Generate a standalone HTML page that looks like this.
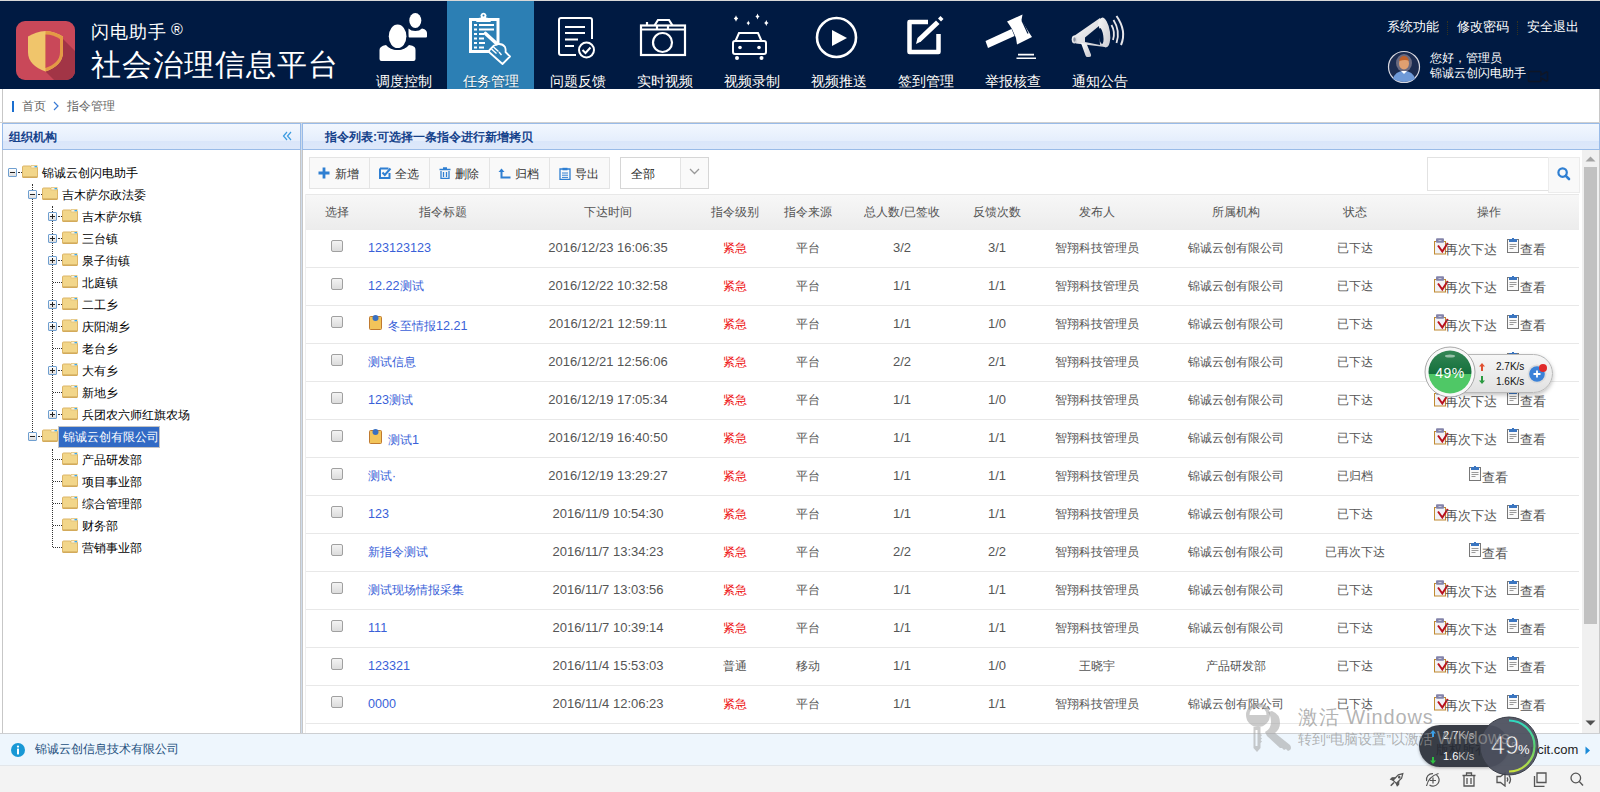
<!DOCTYPE html>
<html><head><meta charset="utf-8">
<style>
*{box-sizing:border-box}
html,body{margin:0;padding:0}
body{width:1600px;height:792px;overflow:hidden;position:relative;background:#f3f3f3;font-family:"Liberation Sans",sans-serif;font-size:12px;color:#333}
.abs{position:absolute}
#topline{left:0;top:0;width:1600px;height:1px;background:#d8d8d8}
#hdr{left:0;top:1px;width:1600px;height:88px;background:#001a42}
.nav{position:absolute;top:0;width:87px;height:88px;text-align:center;color:#fff}
.nav.on{background:#2c7fb4}
.nav .lbl{position:absolute;left:0;width:87px;top:72px;font-size:14px;line-height:16px;text-shadow:0 1px 1px rgba(0,0,0,.35)}
.nav svg{position:absolute;left:0;top:0}
#crumb{left:0;top:89px;width:1600px;height:33px;background:#fff}
#main{left:0;top:122px;width:1600px;height:612px;background:#fff;border-top:1px solid #cfcfcf}
.ph{position:absolute;height:27px;border:1px solid #99bbe8;background:linear-gradient(#f2f7fe 0,#e5eefc 66%,#dae6fa 67%,#dde8fa 100%)}
.ph .t{position:absolute;top:6px;font-size:12px;font-weight:bold;color:#15428b;line-height:14px}
#lp{left:2px;top:123px;width:299px;height:611px;border-left:1px solid #c7c7c7;border-right:1px solid #c6c6c6}
#rp{left:302px;top:123px;width:1298px;height:611px;border-left:1px solid #c6c6c6}
.tn{position:absolute;height:16px;line-height:16px;font-size:12px;color:#000;white-space:nowrap}
.sw{position:absolute;width:9px;height:9px;border:1px solid #6f9fd0;border-radius:1px;background:linear-gradient(#fff,#ddd)}
.sw:before{content:"";position:absolute;left:1px;top:3px;width:5px;height:1px;background:#222}
.sw.p:after{content:"";position:absolute;left:3px;top:1px;width:1px;height:5px;background:#222}
.fd{position:absolute;width:16px;height:13px}
.tn.sel{height:22px;width:102px;line-height:20px;padding:0 0 0 4px;background:#316ac5;color:#fff;border:1px solid #c4c4c4}
.vl{position:absolute;width:1px;border-left:1px dotted #333}
.hl{position:absolute;height:1px;border-top:1px dotted #333}
/* grid */
.tbt{position:absolute;top:167px;font-size:12px;line-height:14px;color:#333;white-space:nowrap}
#tb{left:309px;top:157px;width:301px;height:32px;border:1px solid #e3e3e3;background:#f9f9f9}
.tbb{position:absolute;top:0;height:30px;width:60px;border-right:1px solid #e3e3e3;font-size:12px;line-height:30px;color:#333}
#gh{left:306px;top:194px;width:1273px;height:36px;background:linear-gradient(#f7f7f7,#ececec);border-top:1px solid #e8e8e8}
.hc{position:absolute;top:10px;font-size:12px;line-height:14px;color:#555;text-align:center}
.row{position:absolute;left:306px;width:1273px;height:38px;border-bottom:1px solid #e8e8e8;background:#fff}
.c{position:absolute;top:10px;height:16px;line-height:16px;text-align:center;font-size:12px;color:#555;white-space:nowrap}
.num{font-size:13px}
.cb{position:absolute;left:25px;top:10px;width:12px;height:12px;border:1px solid #a0a0a0;border-radius:2px;background:linear-gradient(#f3f3f3,#dcdcdc)}
.c2{left:62px;width:150px;text-align:left}
.lk{color:#3a5fd8;font-size:12.6px}
.att{position:absolute;left:1px;top:-1px}
.lk2{position:absolute;left:20px;top:2px}
.c3{left:212px;width:180px}
.c4{left:392px;width:74px}
.red{color:#ee1111}
.c5{left:466px;width:72px}
.c6{left:538px;width:116px}
.c7{left:654px;width:74px}
.c8{left:728px;width:126px}
.c9{left:854px;width:152px}
.c10{left:1006px;width:86px}
.c11{left:1092px;width:181px}
.ops{top:8px;height:20px}
.c.ops{top:8px}
.ops .ai{vertical-align:top}
.opt{display:inline-block;vertical-align:top;margin-top:5px;line-height:14px;color:#555;font-size:12.5px}
.sp{display:inline-block;width:10px}
#sb{left:1582px;top:150px;width:17px;height:583px;background:#f0f0f0}
#foot{left:0;top:734px;width:1600px;height:31px;background:#eef6fd;border-top:1px solid #d0d4d8}
</style></head><body>
<div id="topline" class="abs"></div>
<div id="hdr" class="abs">
<svg class="abs" style="left:16px;top:20px" width="59" height="59" viewBox="0 0 59 59">
  <defs><clipPath id="lc"><rect x="0" y="0" width="59" height="59" rx="9"/></clipPath></defs>
  <g clip-path="url(#lc)">
  <rect x="0" y="0" width="59" height="59" fill="#c94859"/>
  <path d="M46 17 L90 61 L72 93 L29.5 50.5 Z" fill="#a23546"/>
  <path d="M29.5 10 C23 10 17 12.5 12 15.5 L12 31 C12 41 19 46.5 29.5 50.5 C40 46.5 47 41 47 31 L47 15.5 C42 12.5 36 10 29.5 10 Z" fill="#f0c56b"/>
  <path d="M29.5 10 C36 10 42 12.5 47 15.5 L47 31 C47 41 40 46.5 29.5 50.5 Z" fill="#e49a45"/>
  <path d="M29.5 13.5 C35 13.5 40 15.5 44 18 L44 31 C44 39.5 38 44 29.5 47 Z" fill="#c94859"/>
  </g>
</svg>
<div class="abs" style="left:91px;top:21px;font-size:18px;line-height:20px;color:#fff;letter-spacing:1px;white-space:nowrap">闪电助手<span style="font-size:16px;position:relative;top:-3px;margin-left:4px;letter-spacing:0">®</span></div>
<div class="abs" style="left:91px;top:47px;font-size:30px;line-height:34px;color:#fff;letter-spacing:1px">社会治理信息平台</div>

<div class="nav" style="left:360px">
<svg width="87" height="70" viewBox="0 0 87 70"><g transform="translate(-360,-1)">
<g fill="#fff">
<ellipse cx="415.3" cy="20.5" rx="6" ry="7.6"/>
<path d="M408.5 28.5 Q411 31 415.3 31 Q419.5 31 422 28.5 Q425 29 426 30.5 Q427 31.5 427 33 L427 36.5 Q427 37.6 426 37.6 L409.5 37.6 Q408.5 37.6 408.5 36.5 Z"/>
</g>
<path d="M386 45 Q390 50 397.6 50 Q405 50 409 45 Q413 45.5 414.5 47 Q415.5 48 415.5 50 L415.5 59 Q415.5 61 413.5 61 L381.5 61 Q379.5 61 379.5 59 L379.5 50 Q379.5 48 381 47 Q382.5 45.5 386 45 Z" fill="#fff" stroke="#001a42" stroke-width="0"/>
<ellipse cx="397.6" cy="36.3" rx="10.6" ry="13.6" fill="#001a42"/>
<ellipse cx="397.6" cy="36.3" rx="8.8" ry="11.8" fill="#fff"/>
</g></svg><div class="lbl">调度控制</div></div>

<div class="nav on" style="left:447px">
<svg width="87" height="70" viewBox="0 0 87 70"><g transform="translate(-447,-1)">
<rect x="470.5" y="19.5" width="27.5" height="32" fill="none" stroke="#fff" stroke-width="3"/>
<path d="M476 22 L478.5 18 L481 17.5 A3 3 0 1 1 486 17.5 L488.5 18 L491 22 Z" fill="#fff"/>
<circle cx="483.5" cy="15.5" r="1" fill="#2c7fb4"/>
<g stroke="#fff" stroke-width="2"><path d="M474 25h3M479 25h15M474 29.5h3M479 29.5h15M474 34h3M479 34h5M474 38.5h3M479 38.5h5M474 43h3M479 43h6M474 47.5h3M479 47.5h5"/></g>
<path d="M489.5 50 L494 45.5 L499 44 Q503 44 505 47 Q506 50 505.5 52 L510 56.5 L502.5 64 L489 52 Z" fill="#2c7fb4" stroke="#fff" stroke-width="1.8" stroke-linejoin="round"/>
<path d="M491.5 49 L496.5 53.5 M493.5 47 L498.5 51.5 M499 52 L501.5 55" stroke="#fff" stroke-width="1.4"/>
<path d="M485.5 33.5 L496.5 43.5" stroke="#fff" stroke-width="3.6" stroke-linecap="round"/>
</g></svg><div class="lbl">任务管理</div></div>

<div class="nav" style="left:534px">
<svg width="87" height="70" viewBox="0 0 87 70"><g transform="translate(-534,-1)" fill="none" stroke="#fff" stroke-width="2">
<path d="M576 55 L561 55 Q559 55 559 53 L559 20 Q559 18 561 18 L590 18 Q592 18 592 20 L592 39"/>
<path d="M565 27h20M565 33h20M565 39.5h13M565 46h9"/>
<circle cx="586.5" cy="50" r="7.5"/>
<path d="M582.5 50 L585.5 53 L590.5 47.5"/>
</g></svg><div class="lbl">问题反馈</div></div>

<div class="nav" style="left:621px">
<svg width="87" height="70" viewBox="0 0 87 70"><g transform="translate(-621,-1)" fill="none" stroke="#fff" stroke-width="2.2">
<rect x="641" y="25.5" width="44" height="29.5"/>
<path d="M641 29.5h44"/>
<path d="M654.5 25.5 L658 20 L669 20 L672.5 25.5"/>
<path d="M657 25.5 V29.5 M668 25.5 V29.5"/>
<path d="M647 25 V22"/>
<circle cx="662.5" cy="42.5" r="9.5"/>
</g></svg><div class="lbl">实时视频</div></div>

<div class="nav" style="left:708px">
<svg width="87" height="70" viewBox="0 0 87 70"><g transform="translate(-708,-1)">
<g fill="#fff"><path d="M736 15.2 Q736.6 17.8 738.2 18.5 Q736.6 19.2 736 21.8 Q735.4 19.2 733.8 18.5 Q735.4 17.8 736 15.2 z"/><path d="M748.3 20.6 Q748.8 22.6 750.1 23.1 Q748.8 23.6 748.3 25.6 Q747.8 23.6 746.5 23.1 Q747.8 22.6 748.3 20.6 z"/><path d="M757.5 13.6 Q758.1 15.9 759.6 16.6 Q758.1 17.3 757.5 19.6 Q756.9 17.3 755.4 16.6 Q756.9 15.9 757.5 13.6 z"/><path d="M766.3 19.9 Q766.9 22.3 768.5 23 Q766.9 23.7 766.3 26.1 Q765.7 23.7 764.1 23 Q765.7 22.3 766.3 19.9 z"/></g>
<g fill="none" stroke="#fff" stroke-width="2"><path d="M735.5 41 L739 33 L758 33 L761.5 41"/><rect x="733" y="41" width="33" height="13" rx="2"/></g>
<g fill="#fff"><circle cx="740" cy="47.5" r="1.8"/><circle cx="759" cy="47.5" r="1.8"/><circle cx="737" cy="58" r="2"/><circle cx="761.5" cy="58" r="2"/></g>
</g></svg><div class="lbl">视频录制</div></div>

<div class="nav" style="left:795px">
<svg width="87" height="70" viewBox="0 0 87 70"><g transform="translate(-795,-1)">
<circle cx="836.5" cy="37.5" r="19.5" fill="none" stroke="#fff" stroke-width="2.6"/>
<path d="M832 30 L847 38 L832 46 Z" fill="#fff"/>
</g></svg><div class="lbl">视频推送</div></div>

<div class="nav" style="left:882px">
<svg width="87" height="70" viewBox="0 0 87 70"><g transform="translate(-882,-1)">
<path d="M928 22 L909.5 22 L909.5 52 L938.5 52 L938.5 34" fill="none" stroke="#fff" stroke-width="4.5" stroke-linejoin="round"/>
<path d="M916 44 L917.5 38 L936 20.5 L939.5 24 L921 41.5 Z" fill="#fff"/>
<path d="M938 18.5 L940.5 16 L943.5 19 L941 21.5 Z" fill="#fff"/>
</g></svg><div class="lbl">签到管理</div></div>

<div class="nav" style="left:969px">
<svg width="87" height="70" viewBox="0 0 87 70"><g transform="translate(-969,-1)" fill="#fff">
<path d="M985.5 41 L1011.5 29 L1014.5 36 L988 48 Z"/>
<path d="M1007 21.5 L1022.5 14.5 L1021.5 20 L1029 32.5 L1032 37 L1017 44.5 L1016 38 L1012 29 L1009.5 25 Z"/>
<path d="M1022 20.5 L1028 33.5" stroke="#001a42" stroke-width="1.2"/>
<path d="M1016.5 57.5h19.5v1.6h-19.5z M1018 53.8h16v1.6h-16z"/>
</g></svg><div class="lbl">举报核查</div></div>

<div class="nav" style="left:1056px">
<svg width="87" height="70" viewBox="0 0 87 70"><defs><linearGradient id="mg" x1="0" y1="0" x2="1" y2="1"><stop offset="0" stop-color="#fbfbfb"/><stop offset="1" stop-color="#c8c8ce"/></linearGradient></defs><g transform="translate(-1056,-1)">
<path d="M1074 36 L1100 18 L1105 47 L1076 43.5 Z" fill="url(#mg)"/>
<path d="M1081 43 L1086.5 43.5 L1091 54.5 Q1091.5 57 1089 57 L1087.5 57 Q1086 57 1085.5 55.5 Z" fill="url(#mg)"/>
<ellipse cx="1104" cy="32.5" rx="6" ry="15" fill="url(#mg)" transform="rotate(-8 1104 32.5)"/>
<path d="M1085 37.5 L1099 26 L1100 45 L1085 42 Z" fill="#001a42"/>
<ellipse cx="1101" cy="36" rx="2.3" ry="8" fill="#001a42" transform="rotate(-8 1101 36)"/>
<ellipse cx="1074.5" cy="39.5" rx="2.8" ry="4" fill="url(#mg)"/>
<ellipse cx="1074.5" cy="39.5" rx="1.2" ry="2.2" fill="#8a90a0"/>
<path d="M1111.5 25 Q1115.5 32 1113 40" fill="none" stroke="#e6e6ea" stroke-width="1.8"/>
<path d="M1113.5 20 Q1120.5 31 1116.5 43" fill="none" stroke="#e6e6ea" stroke-width="1.8"/>
<path d="M1116.5 16 Q1127 31 1121 45" fill="none" stroke="#e6e6ea" stroke-width="2"/>
</g></svg><div class="lbl">通知公告</div></div>

<div class="abs" style="left:1387px;top:18px;font-size:13px;line-height:15px;color:#fff;white-space:nowrap">系统功能</div>
<div class="abs" style="left:1447px;top:20px;width:1px;height:14px;border-left:1px dotted #33331f"></div>
<div class="abs" style="left:1457px;top:18px;font-size:13px;line-height:15px;color:#fff;white-space:nowrap">修改密码</div>
<div class="abs" style="left:1517px;top:20px;width:1px;height:14px;border-left:1px dotted #33331f"></div>
<div class="abs" style="left:1527px;top:18px;font-size:13px;line-height:15px;color:#fff;white-space:nowrap">安全退出</div>
<svg class="abs" style="left:1387px;top:49px" width="34" height="34" viewBox="0 0 34 34">
<circle cx="17" cy="17" r="15.5" fill="#1c2c50" stroke="#d8d8e0" stroke-width="1.2"/>
<ellipse cx="17" cy="13" rx="8" ry="9" fill="#6a6a80"/>
<path d="M6 29 Q8 21 17 21 Q26 21 28 29 Q23 32 17 32 Q11 32 6 29 Z" fill="#6f9ad8"/>
<ellipse cx="17" cy="13.5" rx="5" ry="6" fill="#e0a070"/>
<path d="M12 11 Q13 6 17 6 Q21 6 22 11 Q19 9 12 11 Z" fill="#c0602a"/>
<path d="M14 21 L17 24 L20 21 Z" fill="#fff"/>
</svg>
<div class="abs" style="left:1430px;top:50px;font-size:12px;line-height:14px;color:#fff;white-space:nowrap">您好，管理员</div>
<div class="abs" style="left:1430px;top:64.5px;font-size:12px;line-height:14px;color:#fff;white-space:nowrap">锦诚云创闪电助手</div>
<svg class="abs" style="left:1527px;top:69px" width="22" height="13" viewBox="0 0 22 13"><path d="M1.5 2.5 Q1.5 1.5 2.5 1.5 L13 1.5 Q14 1.5 14 2.5 L14 5 L19.5 2 L20.5 2.5 L20.5 10.5 L19.5 11 L14 8 L14 10.5 Q14 11.5 13 11.5 L2.5 11.5 Q1.5 11.5 1.5 10.5 Z" fill="none" stroke="#0d1628" stroke-width="1.6"/></svg>

</div>
<div id="crumb" class="abs">
  <div class="abs" style="left:2px;top:0;width:1px;height:33px;background:#c7c7c7"></div>
  <div class="abs" style="left:12px;top:12px;width:2px;height:11px;background:#1a6fd0"></div>
  <div class="abs" style="left:22px;top:10px;font-size:12px;line-height:14px;color:#666">首页</div>
  <svg class="abs" style="left:53px;top:12px" width="6" height="10" viewBox="0 0 6 10"><path d="M1 1 L5 5 L1 9" fill="none" stroke="#3a7bd5" stroke-width="1.2"/></svg>
  <div class="abs" style="left:67px;top:10px;font-size:12px;line-height:14px;color:#666">指令管理</div>
</div>
<div id="main" class="abs"></div>
<div class="abs" style="left:301px;top:123px;width:1px;height:610px;background:#cfdcec"></div>
<div class="abs" style="left:305px;top:194px;width:1px;height:539px;background:#efefef"></div>
<div id="lp" class="abs">
  <div class="ph" style="left:-1px;top:0;width:299px"><div class="t" style="left:6px">组织机构</div>
  <svg class="abs" style="left:279px;top:7px" width="10" height="10" viewBox="0 0 10 10"><path d="M5 1 L1.5 5 L5 9 M9 1 L5.5 5 L9 9" fill="none" stroke="#3b9be0" stroke-width="1.2"/></svg></div>

</div>
<div id="tree" class="abs" style="left:0;top:0;width:300px;height:733px">
<svg width="0" height="0" style="position:absolute"><defs><symbol id="fold" viewBox="0 0 16 13"><path d="M0.5 2 Q0.5 1 1.5 1 L8 1 L9 2 L15 2 Q15.5 2 15.5 3 L15.5 12 Q15.5 12.5 15 12.5 L1 12.5 Q0.5 12.5 0.5 12 Z" fill="#f2d68a" stroke="#dcb567" stroke-width="1"/><rect x="9" y="0.5" width="6" height="2.5" fill="#fbf1d6" stroke="#e2c27a" stroke-width="0.8"/><rect x="12.5" y="1" width="2.5" height="1.3" fill="#3aa8f0"/><path d="M1 12 L15 12" stroke="#c9a050" stroke-width="1"/></symbol></defs></svg>
<div class="vl" style="left:32px;top:184px;height:248px"></div>
<div class="vl" style="left:52px;top:206px;height:204px"></div>
<div class="vl" style="left:52px;top:449px;height:98px"></div>
<div class="sw " style="left:8px;top:168px"></div>
<div class="hl" style="left:18px;top:172px;width:4px"></div>
<svg class="fd" style="left:22px;top:165px" width="16" height="13"><use href="#fold"/></svg>
<div class="tn" style="left:42px;top:165px">锦诚云创闪电助手</div>
<div class="sw " style="left:28px;top:190px"></div>
<div class="hl" style="left:38px;top:194px;width:4px"></div>
<svg class="fd" style="left:42px;top:187px" width="16" height="13"><use href="#fold"/></svg>
<div class="tn" style="left:62px;top:187px">吉木萨尔政法委</div>
<div class="sw p" style="left:48px;top:212px"></div>
<div class="hl" style="left:58px;top:216px;width:4px"></div>
<svg class="fd" style="left:62px;top:209px" width="16" height="13"><use href="#fold"/></svg>
<div class="tn" style="left:82px;top:209px">吉木萨尔镇</div>
<div class="sw p" style="left:48px;top:234px"></div>
<div class="hl" style="left:58px;top:238px;width:4px"></div>
<svg class="fd" style="left:62px;top:231px" width="16" height="13"><use href="#fold"/></svg>
<div class="tn" style="left:82px;top:231px">三台镇</div>
<div class="sw p" style="left:48px;top:256px"></div>
<div class="hl" style="left:58px;top:260px;width:4px"></div>
<svg class="fd" style="left:62px;top:253px" width="16" height="13"><use href="#fold"/></svg>
<div class="tn" style="left:82px;top:253px">泉子街镇</div>
<div class="hl" style="left:53px;top:282px;width:9px"></div>
<svg class="fd" style="left:62px;top:275px" width="16" height="13"><use href="#fold"/></svg>
<div class="tn" style="left:82px;top:275px">北庭镇</div>
<div class="sw p" style="left:48px;top:300px"></div>
<div class="hl" style="left:58px;top:304px;width:4px"></div>
<svg class="fd" style="left:62px;top:297px" width="16" height="13"><use href="#fold"/></svg>
<div class="tn" style="left:82px;top:297px">二工乡</div>
<div class="sw p" style="left:48px;top:322px"></div>
<div class="hl" style="left:58px;top:326px;width:4px"></div>
<svg class="fd" style="left:62px;top:319px" width="16" height="13"><use href="#fold"/></svg>
<div class="tn" style="left:82px;top:319px">庆阳湖乡</div>
<div class="hl" style="left:53px;top:348px;width:9px"></div>
<svg class="fd" style="left:62px;top:341px" width="16" height="13"><use href="#fold"/></svg>
<div class="tn" style="left:82px;top:341px">老台乡</div>
<div class="sw p" style="left:48px;top:366px"></div>
<div class="hl" style="left:58px;top:370px;width:4px"></div>
<svg class="fd" style="left:62px;top:363px" width="16" height="13"><use href="#fold"/></svg>
<div class="tn" style="left:82px;top:363px">大有乡</div>
<div class="hl" style="left:53px;top:392px;width:9px"></div>
<svg class="fd" style="left:62px;top:385px" width="16" height="13"><use href="#fold"/></svg>
<div class="tn" style="left:82px;top:385px">新地乡</div>
<div class="sw p" style="left:48px;top:410px"></div>
<div class="hl" style="left:58px;top:414px;width:4px"></div>
<svg class="fd" style="left:62px;top:407px" width="16" height="13"><use href="#fold"/></svg>
<div class="tn" style="left:82px;top:407px">兵团农六师红旗农场</div>
<div class="sw " style="left:28px;top:432px"></div>
<div class="hl" style="left:38px;top:436px;width:4px"></div>
<svg class="fd" style="left:42px;top:429px" width="16" height="13"><use href="#fold"/></svg>
<div class="tn sel" style="left:58px;top:426px">锦诚云创有限公司</div>
<div class="hl" style="left:53px;top:459px;width:9px"></div>
<svg class="fd" style="left:62px;top:452px" width="16" height="13"><use href="#fold"/></svg>
<div class="tn" style="left:82px;top:452px">产品研发部</div>
<div class="hl" style="left:53px;top:481px;width:9px"></div>
<svg class="fd" style="left:62px;top:474px" width="16" height="13"><use href="#fold"/></svg>
<div class="tn" style="left:82px;top:474px">项目事业部</div>
<div class="hl" style="left:53px;top:503px;width:9px"></div>
<svg class="fd" style="left:62px;top:496px" width="16" height="13"><use href="#fold"/></svg>
<div class="tn" style="left:82px;top:496px">综合管理部</div>
<div class="hl" style="left:53px;top:525px;width:9px"></div>
<svg class="fd" style="left:62px;top:518px" width="16" height="13"><use href="#fold"/></svg>
<div class="tn" style="left:82px;top:518px">财务部</div>
<div class="hl" style="left:53px;top:547px;width:9px"></div>
<svg class="fd" style="left:62px;top:540px" width="16" height="13"><use href="#fold"/></svg>
<div class="tn" style="left:82px;top:540px">营销事业部</div>
</div>
<div id="rp" class="abs">
  <div class="ph" style="left:-1px;top:0;width:1298px"><div class="t" style="left:22px">指令列表:可选择一条指令进行新增拷贝</div></div>
</div>
<div class="abs" style="left:309px;top:157px;width:301px;height:32px;border:1px solid #e4e4e4;background:#f9f9f9"></div>
<div class="abs" style="left:369px;top:158px;width:1px;height:30px;background:#e4e4e4"></div>
<div class="abs" style="left:429px;top:158px;width:1px;height:30px;background:#e4e4e4"></div>
<div class="abs" style="left:489px;top:158px;width:1px;height:30px;background:#e4e4e4"></div>
<div class="abs" style="left:549px;top:158px;width:1px;height:30px;background:#e4e4e4"></div>
<svg class="abs" style="left:318px;top:167px" width="12" height="12" viewBox="0 0 12 12"><path d="M4.6 0.5h2.8v4.1h4.1v2.8h-4.1v4.1h-2.8v-4.1h-4.1v-2.8h4.1z" fill="#2f7fd2"/></svg>
<div class="tbt" style="left:335px">新增</div>
<svg class="abs" style="left:379px;top:167px" width="13" height="12" viewBox="0 0 13 12"><path d="M1 1.5h8.5M1 1.5v9.5h9.5v-5" fill="none" stroke="#2f7fd2" stroke-width="2"/><path d="M3.5 5.5 L5.8 8 L11.5 1.5" fill="none" stroke="#2f7fd2" stroke-width="2"/></svg>
<div class="tbt" style="left:395px">全选</div>
<svg class="abs" style="left:439px;top:167px" width="12" height="12" viewBox="0 0 12 12"><path d="M0.5 2.5h11M4 1h4M2 4v7.5h8V4M4.5 5v5M7.5 5v5" fill="none" stroke="#2f7fd2" stroke-width="1.3"/></svg>
<div class="tbt" style="left:455px">删除</div>
<svg class="abs" style="left:498px;top:168px" width="13" height="11" viewBox="0 0 13 11"><path d="M0.5 4 L3.5 0.5 L6.5 4 Z" fill="#2f7fd2"/><path d="M3.5 3v6.5h9" fill="none" stroke="#2f7fd2" stroke-width="2"/></svg>
<div class="tbt" style="left:515px">归档</div>
<svg class="abs" style="left:559px;top:167px" width="12" height="13" viewBox="0 0 12 13"><path d="M1 2h10v10.5h-10z" fill="none" stroke="#2f7fd2" stroke-width="1.3"/><path d="M3.5 0.8h5v2.5h-5z" fill="#2f7fd2"/><path d="M3 6h6M3 8.2h6M3 10.4h6" stroke="#2f7fd2" stroke-width="1"/></svg>
<div class="tbt" style="left:575px">导出</div>
<div class="abs" style="left:620px;top:157px;width:89px;height:32px;border:1px solid #d6d6d6;background:#fff"></div>
<div class="abs" style="left:680px;top:158px;width:28px;height:30px;border-left:1px solid #e4e4e4;background:#fafafa"></div>
<div class="tbt" style="left:631px;color:#222">全部</div>
<svg class="abs" style="left:689px;top:168px" width="11" height="7" viewBox="0 0 11 7"><path d="M1 1 L5.5 5.5 L10 1" fill="none" stroke="#999" stroke-width="1.3"/></svg>
<div class="abs" style="left:1427px;top:157px;width:122px;height:34px;border:1px solid #e2e2e2;border-right:none;background:#fff"></div>
<div class="abs" style="left:1548px;top:157px;width:32px;height:36px;border:1px solid #ececec;background:#f9f9f9"></div>
<svg class="abs" style="left:1557px;top:166.5px" width="14" height="14" viewBox="0 0 14 14"><circle cx="5.6" cy="5.6" r="4.2" fill="none" stroke="#2f7fd2" stroke-width="2.2"/><path d="M8.8 8.8 L12 12" stroke="#2f7fd2" stroke-width="2.6" stroke-linecap="round"/></svg>

<div id="gh" class="abs">
  <div class="hc" style="left:0;width:62px">选择</div>
  <div class="hc" style="left:62px;width:150px">指令标题</div>
  <div class="hc" style="left:212px;width:180px">下达时间</div>
  <div class="hc" style="left:392px;width:74px">指令级别</div>
  <div class="hc" style="left:466px;width:72px">指令来源</div>
  <div class="hc" style="left:538px;width:116px">总人数/已签收</div>
  <div class="hc" style="left:654px;width:74px">反馈次数</div>
  <div class="hc" style="left:728px;width:126px">发布人</div>
  <div class="hc" style="left:854px;width:152px">所属机构</div>
  <div class="hc" style="left:1006px;width:86px">状态</div>
  <div class="hc" style="left:1092px;width:181px">操作</div>
</div>
<div class="abs" style="left:306px;top:230px;width:1273px;height:503px;overflow:hidden">
<div style="position:absolute;left:-306px;top:-230px;width:1600px;height:792px">
<div class="row" style="top:230px"><div class="cb"></div><div class="c c2"><span class="lk">123123123</span></div><div class="c c3 num">2016/12/23 16:06:35</div><div class="c c4 red">紧急</div><div class="c c5">平台</div><div class="c c6 num">3/2</div><div class="c c7 num">3/1</div><div class="c c8">智翔科技管理员</div><div class="c c9">锦诚云创有限公司</div><div class="c c10">已下达</div><div class="c c11 ops"><svg class="ai" width="13" height="17" viewBox="0 0 13 17" style="overflow:visible"><rect x="2.5" y="3.5" width="11" height="12.5" fill="#f2f2f6" stroke="#c08a30" stroke-width="1"/><rect x="4" y="0.3" width="8" height="4.5" rx="1" fill="#8484aa"/><rect x="6.5" y="2" width="3" height="1" fill="#c8c8dc"/><path d="M6 7.5 L10.3 13.5 L15.8 5" fill="none" stroke="#b8121f" stroke-width="2"/></svg><span class="opt">再次下达</span><span class="sp"></span><svg class="ai" width="13" height="15" viewBox="0 0 13 15"><rect x="0.5" y="1.5" width="11" height="13" fill="#fafafa" stroke="#777" stroke-width="1"/><rect x="2" y="1" width="8" height="3" fill="#3a75c0"/><rect x="5" y="0" width="2" height="2" fill="#3a75c0"/><path d="M2.5 6.5h7M2.5 8.5h7M2.5 10.5h4" stroke="#999" stroke-width="1"/></svg><span class="opt">查看</span></div></div>
<div class="row" style="top:268px"><div class="cb"></div><div class="c c2"><span class="lk">12.22<span style="font-size:12px">测试</span></span></div><div class="c c3 num">2016/12/22 10:32:58</div><div class="c c4 red">紧急</div><div class="c c5">平台</div><div class="c c6 num">1/1</div><div class="c c7 num">1/1</div><div class="c c8">智翔科技管理员</div><div class="c c9">锦诚云创有限公司</div><div class="c c10">已下达</div><div class="c c11 ops"><svg class="ai" width="13" height="17" viewBox="0 0 13 17" style="overflow:visible"><rect x="2.5" y="3.5" width="11" height="12.5" fill="#f2f2f6" stroke="#c08a30" stroke-width="1"/><rect x="4" y="0.3" width="8" height="4.5" rx="1" fill="#8484aa"/><rect x="6.5" y="2" width="3" height="1" fill="#c8c8dc"/><path d="M6 7.5 L10.3 13.5 L15.8 5" fill="none" stroke="#b8121f" stroke-width="2"/></svg><span class="opt">再次下达</span><span class="sp"></span><svg class="ai" width="13" height="15" viewBox="0 0 13 15"><rect x="0.5" y="1.5" width="11" height="13" fill="#fafafa" stroke="#777" stroke-width="1"/><rect x="2" y="1" width="8" height="3" fill="#3a75c0"/><rect x="5" y="0" width="2" height="2" fill="#3a75c0"/><path d="M2.5 6.5h7M2.5 8.5h7M2.5 10.5h4" stroke="#999" stroke-width="1"/></svg><span class="opt">查看</span></div></div>
<div class="row" style="top:306px"><div class="cb"></div><div class="c c2"><svg class="att" width="13" height="15" viewBox="0 0 13 15"><rect x="0.5" y="1.5" width="12" height="13" rx="1" fill="#f2c45a" stroke="#c07a30" stroke-width="1"/><circle cx="6.5" cy="3" r="3" fill="#3a70c0"/></svg><span class="lk lk2"><span style="font-size:12px">冬至情报</span>12.21</span></div><div class="c c3 num">2016/12/21 12:59:11</div><div class="c c4 red">紧急</div><div class="c c5">平台</div><div class="c c6 num">1/1</div><div class="c c7 num">1/0</div><div class="c c8">智翔科技管理员</div><div class="c c9">锦诚云创有限公司</div><div class="c c10">已下达</div><div class="c c11 ops"><svg class="ai" width="13" height="17" viewBox="0 0 13 17" style="overflow:visible"><rect x="2.5" y="3.5" width="11" height="12.5" fill="#f2f2f6" stroke="#c08a30" stroke-width="1"/><rect x="4" y="0.3" width="8" height="4.5" rx="1" fill="#8484aa"/><rect x="6.5" y="2" width="3" height="1" fill="#c8c8dc"/><path d="M6 7.5 L10.3 13.5 L15.8 5" fill="none" stroke="#b8121f" stroke-width="2"/></svg><span class="opt">再次下达</span><span class="sp"></span><svg class="ai" width="13" height="15" viewBox="0 0 13 15"><rect x="0.5" y="1.5" width="11" height="13" fill="#fafafa" stroke="#777" stroke-width="1"/><rect x="2" y="1" width="8" height="3" fill="#3a75c0"/><rect x="5" y="0" width="2" height="2" fill="#3a75c0"/><path d="M2.5 6.5h7M2.5 8.5h7M2.5 10.5h4" stroke="#999" stroke-width="1"/></svg><span class="opt">查看</span></div></div>
<div class="row" style="top:344px"><div class="cb"></div><div class="c c2"><span class="lk"><span style="font-size:12px">测试信息</span></span></div><div class="c c3 num">2016/12/21 12:56:06</div><div class="c c4 red">紧急</div><div class="c c5">平台</div><div class="c c6 num">2/2</div><div class="c c7 num">2/1</div><div class="c c8">智翔科技管理员</div><div class="c c9">锦诚云创有限公司</div><div class="c c10">已下达</div><div class="c c11 ops"><svg class="ai" width="13" height="17" viewBox="0 0 13 17" style="overflow:visible"><rect x="2.5" y="3.5" width="11" height="12.5" fill="#f2f2f6" stroke="#c08a30" stroke-width="1"/><rect x="4" y="0.3" width="8" height="4.5" rx="1" fill="#8484aa"/><rect x="6.5" y="2" width="3" height="1" fill="#c8c8dc"/><path d="M6 7.5 L10.3 13.5 L15.8 5" fill="none" stroke="#b8121f" stroke-width="2"/></svg><span class="opt">再次下达</span><span class="sp"></span><svg class="ai" width="13" height="15" viewBox="0 0 13 15"><rect x="0.5" y="1.5" width="11" height="13" fill="#fafafa" stroke="#777" stroke-width="1"/><rect x="2" y="1" width="8" height="3" fill="#3a75c0"/><rect x="5" y="0" width="2" height="2" fill="#3a75c0"/><path d="M2.5 6.5h7M2.5 8.5h7M2.5 10.5h4" stroke="#999" stroke-width="1"/></svg><span class="opt">查看</span></div></div>
<div class="row" style="top:382px"><div class="cb"></div><div class="c c2"><span class="lk">123<span style="font-size:12px">测试</span></span></div><div class="c c3 num">2016/12/19 17:05:34</div><div class="c c4 red">紧急</div><div class="c c5">平台</div><div class="c c6 num">1/1</div><div class="c c7 num">1/0</div><div class="c c8">智翔科技管理员</div><div class="c c9">锦诚云创有限公司</div><div class="c c10">已下达</div><div class="c c11 ops"><svg class="ai" width="13" height="17" viewBox="0 0 13 17" style="overflow:visible"><rect x="2.5" y="3.5" width="11" height="12.5" fill="#f2f2f6" stroke="#c08a30" stroke-width="1"/><rect x="4" y="0.3" width="8" height="4.5" rx="1" fill="#8484aa"/><rect x="6.5" y="2" width="3" height="1" fill="#c8c8dc"/><path d="M6 7.5 L10.3 13.5 L15.8 5" fill="none" stroke="#b8121f" stroke-width="2"/></svg><span class="opt">再次下达</span><span class="sp"></span><svg class="ai" width="13" height="15" viewBox="0 0 13 15"><rect x="0.5" y="1.5" width="11" height="13" fill="#fafafa" stroke="#777" stroke-width="1"/><rect x="2" y="1" width="8" height="3" fill="#3a75c0"/><rect x="5" y="0" width="2" height="2" fill="#3a75c0"/><path d="M2.5 6.5h7M2.5 8.5h7M2.5 10.5h4" stroke="#999" stroke-width="1"/></svg><span class="opt">查看</span></div></div>
<div class="row" style="top:420px"><div class="cb"></div><div class="c c2"><svg class="att" width="13" height="15" viewBox="0 0 13 15"><rect x="0.5" y="1.5" width="12" height="13" rx="1" fill="#f2c45a" stroke="#c07a30" stroke-width="1"/><circle cx="6.5" cy="3" r="3" fill="#3a70c0"/></svg><span class="lk lk2"><span style="font-size:12px">测试</span>1</span></div><div class="c c3 num">2016/12/19 16:40:50</div><div class="c c4 red">紧急</div><div class="c c5">平台</div><div class="c c6 num">1/1</div><div class="c c7 num">1/1</div><div class="c c8">智翔科技管理员</div><div class="c c9">锦诚云创有限公司</div><div class="c c10">已下达</div><div class="c c11 ops"><svg class="ai" width="13" height="17" viewBox="0 0 13 17" style="overflow:visible"><rect x="2.5" y="3.5" width="11" height="12.5" fill="#f2f2f6" stroke="#c08a30" stroke-width="1"/><rect x="4" y="0.3" width="8" height="4.5" rx="1" fill="#8484aa"/><rect x="6.5" y="2" width="3" height="1" fill="#c8c8dc"/><path d="M6 7.5 L10.3 13.5 L15.8 5" fill="none" stroke="#b8121f" stroke-width="2"/></svg><span class="opt">再次下达</span><span class="sp"></span><svg class="ai" width="13" height="15" viewBox="0 0 13 15"><rect x="0.5" y="1.5" width="11" height="13" fill="#fafafa" stroke="#777" stroke-width="1"/><rect x="2" y="1" width="8" height="3" fill="#3a75c0"/><rect x="5" y="0" width="2" height="2" fill="#3a75c0"/><path d="M2.5 6.5h7M2.5 8.5h7M2.5 10.5h4" stroke="#999" stroke-width="1"/></svg><span class="opt">查看</span></div></div>
<div class="row" style="top:458px"><div class="cb"></div><div class="c c2"><span class="lk"><span style="font-size:12px">测试·</span></span></div><div class="c c3 num">2016/12/19 13:29:27</div><div class="c c4 red">紧急</div><div class="c c5">平台</div><div class="c c6 num">1/1</div><div class="c c7 num">1/1</div><div class="c c8">智翔科技管理员</div><div class="c c9">锦诚云创有限公司</div><div class="c c10">已归档</div><div class="c c11 ops"><svg class="ai" width="13" height="15" viewBox="0 0 13 15"><rect x="0.5" y="1.5" width="11" height="13" fill="#fafafa" stroke="#777" stroke-width="1"/><rect x="2" y="1" width="8" height="3" fill="#3a75c0"/><rect x="5" y="0" width="2" height="2" fill="#3a75c0"/><path d="M2.5 6.5h7M2.5 8.5h7M2.5 10.5h4" stroke="#999" stroke-width="1"/></svg><span class="opt">查看</span></div></div>
<div class="row" style="top:496px"><div class="cb"></div><div class="c c2"><span class="lk">123</span></div><div class="c c3 num">2016/11/9 10:54:30</div><div class="c c4 red">紧急</div><div class="c c5">平台</div><div class="c c6 num">1/1</div><div class="c c7 num">1/1</div><div class="c c8">智翔科技管理员</div><div class="c c9">锦诚云创有限公司</div><div class="c c10">已下达</div><div class="c c11 ops"><svg class="ai" width="13" height="17" viewBox="0 0 13 17" style="overflow:visible"><rect x="2.5" y="3.5" width="11" height="12.5" fill="#f2f2f6" stroke="#c08a30" stroke-width="1"/><rect x="4" y="0.3" width="8" height="4.5" rx="1" fill="#8484aa"/><rect x="6.5" y="2" width="3" height="1" fill="#c8c8dc"/><path d="M6 7.5 L10.3 13.5 L15.8 5" fill="none" stroke="#b8121f" stroke-width="2"/></svg><span class="opt">再次下达</span><span class="sp"></span><svg class="ai" width="13" height="15" viewBox="0 0 13 15"><rect x="0.5" y="1.5" width="11" height="13" fill="#fafafa" stroke="#777" stroke-width="1"/><rect x="2" y="1" width="8" height="3" fill="#3a75c0"/><rect x="5" y="0" width="2" height="2" fill="#3a75c0"/><path d="M2.5 6.5h7M2.5 8.5h7M2.5 10.5h4" stroke="#999" stroke-width="1"/></svg><span class="opt">查看</span></div></div>
<div class="row" style="top:534px"><div class="cb"></div><div class="c c2"><span class="lk"><span style="font-size:12px">新指令测试</span></span></div><div class="c c3 num">2016/11/7 13:34:23</div><div class="c c4 red">紧急</div><div class="c c5">平台</div><div class="c c6 num">2/2</div><div class="c c7 num">2/2</div><div class="c c8">智翔科技管理员</div><div class="c c9">锦诚云创有限公司</div><div class="c c10">已再次下达</div><div class="c c11 ops"><svg class="ai" width="13" height="15" viewBox="0 0 13 15"><rect x="0.5" y="1.5" width="11" height="13" fill="#fafafa" stroke="#777" stroke-width="1"/><rect x="2" y="1" width="8" height="3" fill="#3a75c0"/><rect x="5" y="0" width="2" height="2" fill="#3a75c0"/><path d="M2.5 6.5h7M2.5 8.5h7M2.5 10.5h4" stroke="#999" stroke-width="1"/></svg><span class="opt">查看</span></div></div>
<div class="row" style="top:572px"><div class="cb"></div><div class="c c2"><span class="lk"><span style="font-size:12px">测试现场情报采集</span></span></div><div class="c c3 num">2016/11/7 13:03:56</div><div class="c c4 red">紧急</div><div class="c c5">平台</div><div class="c c6 num">1/1</div><div class="c c7 num">1/1</div><div class="c c8">智翔科技管理员</div><div class="c c9">锦诚云创有限公司</div><div class="c c10">已下达</div><div class="c c11 ops"><svg class="ai" width="13" height="17" viewBox="0 0 13 17" style="overflow:visible"><rect x="2.5" y="3.5" width="11" height="12.5" fill="#f2f2f6" stroke="#c08a30" stroke-width="1"/><rect x="4" y="0.3" width="8" height="4.5" rx="1" fill="#8484aa"/><rect x="6.5" y="2" width="3" height="1" fill="#c8c8dc"/><path d="M6 7.5 L10.3 13.5 L15.8 5" fill="none" stroke="#b8121f" stroke-width="2"/></svg><span class="opt">再次下达</span><span class="sp"></span><svg class="ai" width="13" height="15" viewBox="0 0 13 15"><rect x="0.5" y="1.5" width="11" height="13" fill="#fafafa" stroke="#777" stroke-width="1"/><rect x="2" y="1" width="8" height="3" fill="#3a75c0"/><rect x="5" y="0" width="2" height="2" fill="#3a75c0"/><path d="M2.5 6.5h7M2.5 8.5h7M2.5 10.5h4" stroke="#999" stroke-width="1"/></svg><span class="opt">查看</span></div></div>
<div class="row" style="top:610px"><div class="cb"></div><div class="c c2"><span class="lk">111</span></div><div class="c c3 num">2016/11/7 10:39:14</div><div class="c c4 red">紧急</div><div class="c c5">平台</div><div class="c c6 num">1/1</div><div class="c c7 num">1/1</div><div class="c c8">智翔科技管理员</div><div class="c c9">锦诚云创有限公司</div><div class="c c10">已下达</div><div class="c c11 ops"><svg class="ai" width="13" height="17" viewBox="0 0 13 17" style="overflow:visible"><rect x="2.5" y="3.5" width="11" height="12.5" fill="#f2f2f6" stroke="#c08a30" stroke-width="1"/><rect x="4" y="0.3" width="8" height="4.5" rx="1" fill="#8484aa"/><rect x="6.5" y="2" width="3" height="1" fill="#c8c8dc"/><path d="M6 7.5 L10.3 13.5 L15.8 5" fill="none" stroke="#b8121f" stroke-width="2"/></svg><span class="opt">再次下达</span><span class="sp"></span><svg class="ai" width="13" height="15" viewBox="0 0 13 15"><rect x="0.5" y="1.5" width="11" height="13" fill="#fafafa" stroke="#777" stroke-width="1"/><rect x="2" y="1" width="8" height="3" fill="#3a75c0"/><rect x="5" y="0" width="2" height="2" fill="#3a75c0"/><path d="M2.5 6.5h7M2.5 8.5h7M2.5 10.5h4" stroke="#999" stroke-width="1"/></svg><span class="opt">查看</span></div></div>
<div class="row" style="top:648px"><div class="cb"></div><div class="c c2"><span class="lk">123321</span></div><div class="c c3 num">2016/11/4 15:53:03</div><div class="c c4 ">普通</div><div class="c c5">移动</div><div class="c c6 num">1/1</div><div class="c c7 num">1/0</div><div class="c c8">王晓宇</div><div class="c c9">产品研发部</div><div class="c c10">已下达</div><div class="c c11 ops"><svg class="ai" width="13" height="17" viewBox="0 0 13 17" style="overflow:visible"><rect x="2.5" y="3.5" width="11" height="12.5" fill="#f2f2f6" stroke="#c08a30" stroke-width="1"/><rect x="4" y="0.3" width="8" height="4.5" rx="1" fill="#8484aa"/><rect x="6.5" y="2" width="3" height="1" fill="#c8c8dc"/><path d="M6 7.5 L10.3 13.5 L15.8 5" fill="none" stroke="#b8121f" stroke-width="2"/></svg><span class="opt">再次下达</span><span class="sp"></span><svg class="ai" width="13" height="15" viewBox="0 0 13 15"><rect x="0.5" y="1.5" width="11" height="13" fill="#fafafa" stroke="#777" stroke-width="1"/><rect x="2" y="1" width="8" height="3" fill="#3a75c0"/><rect x="5" y="0" width="2" height="2" fill="#3a75c0"/><path d="M2.5 6.5h7M2.5 8.5h7M2.5 10.5h4" stroke="#999" stroke-width="1"/></svg><span class="opt">查看</span></div></div>
<div class="row" style="top:686px"><div class="cb"></div><div class="c c2"><span class="lk">0000</span></div><div class="c c3 num">2016/11/4 12:06:23</div><div class="c c4 red">紧急</div><div class="c c5">平台</div><div class="c c6 num">1/1</div><div class="c c7 num">1/1</div><div class="c c8">智翔科技管理员</div><div class="c c9">锦诚云创有限公司</div><div class="c c10">已下达</div><div class="c c11 ops"><svg class="ai" width="13" height="17" viewBox="0 0 13 17" style="overflow:visible"><rect x="2.5" y="3.5" width="11" height="12.5" fill="#f2f2f6" stroke="#c08a30" stroke-width="1"/><rect x="4" y="0.3" width="8" height="4.5" rx="1" fill="#8484aa"/><rect x="6.5" y="2" width="3" height="1" fill="#c8c8dc"/><path d="M6 7.5 L10.3 13.5 L15.8 5" fill="none" stroke="#b8121f" stroke-width="2"/></svg><span class="opt">再次下达</span><span class="sp"></span><svg class="ai" width="13" height="15" viewBox="0 0 13 15"><rect x="0.5" y="1.5" width="11" height="13" fill="#fafafa" stroke="#777" stroke-width="1"/><rect x="2" y="1" width="8" height="3" fill="#3a75c0"/><rect x="5" y="0" width="2" height="2" fill="#3a75c0"/><path d="M2.5 6.5h7M2.5 8.5h7M2.5 10.5h4" stroke="#999" stroke-width="1"/></svg><span class="opt">查看</span></div></div>
</div></div>
<div id="sb" class="abs"></div>
<div class="abs" style="left:1599px;top:89px;width:1px;height:33px;background:#c8c8c8"></div>
<div class="abs" style="left:1599px;top:150px;width:1px;height:583px;background:#c8c8c8"></div>
<svg class="abs" style="left:1585px;top:156px" width="11" height="6" viewBox="0 0 11 6"><path d="M0.5 5.5 L5.5 0.5 L10.5 5.5 Z" fill="#a3a3a3"/></svg>
<div class="abs" style="left:1584px;top:167px;width:13px;height:457px;background:#c1c1c1"></div>
<svg class="abs" style="left:1585px;top:720px" width="11" height="6" viewBox="0 0 11 6"><path d="M0.5 0.5 L5.5 5.5 L10.5 0.5 Z" fill="#505050"/></svg>
<div class="abs" style="left:0;top:733px;width:1600px;height:1px;background:#cdcfd2"></div>
<div class="abs" style="left:0;top:734px;width:1600px;height:32px;background:#eef6fd;border-bottom:1px solid #e2e6ea"></div>
<svg class="abs" style="left:11px;top:743px" width="14" height="14" viewBox="0 0 14 14"><circle cx="7" cy="7" r="7" fill="#1998d5"/><rect x="6" y="5.6" width="2" height="5.8" fill="#fff"/><circle cx="7" cy="3.6" r="1.15" fill="#fff"/></svg>
<div class="abs" style="left:35px;top:742px;font-size:12px;line-height:14px;color:#24507e;white-space:nowrap">锦诚云创信息技术有限公司</div>
<div class="abs" style="left:1436px;top:742px;font-size:13px;line-height:16px;color:#222;white-space:nowrap">版权所有 2016 jincit.com</div>
<svg class="abs" style="left:1585px;top:746px" width="6" height="9" viewBox="0 0 6 9"><path d="M0.5 0.5 L5 4.5 L0.5 8.5 Z" fill="#1a8ad8"/></svg>

<svg class="abs" style="left:1389px;top:771px" width="16" height="16" viewBox="0 0 16 16"><g transform="translate(8.5 8) rotate(45)" fill="none" stroke="#555" stroke-width="1.2"><path d="M-2.3 4 L-2.3 -3.5 L0 -7.5 L2.3 -3.5 L2.3 4 Z"/><path d="M-2.3 0.5 L-4.6 3 L-4.6 5 L-2.3 4 M2.3 0.5 L4.6 3 L4.6 5 L2.3 4" fill="#555"/><circle cx="0" cy="-2.5" r="0.7" fill="#555"/><path d="M0 5 L0 9.5" stroke-width="1.6"/></g></svg>
<svg class="abs" style="left:1425px;top:772px" width="15" height="15" viewBox="0 0 15 15" fill="none" stroke="#555" stroke-width="1.2"><path d="M1.6 9 A6 6 0 0 1 8 1.6"/><path d="M11.5 3 A6 6 0 0 1 4.5 13"/><path d="M1.5 14 Q3.5 4.5 13.5 1.5"/><path d="M8 5.5v6M5 8.5h6"/></svg>
<svg class="abs" style="left:1462px;top:772px" width="14" height="15" viewBox="0 0 14 15" fill="none" stroke="#555" stroke-width="1.3"><path d="M0.5 3.5h13M4.5 3.5V1h5v2.5M2 3.5v10.5h10V3.5M5 6v6M9 6v6"/></svg>
<svg class="abs" style="left:1496px;top:772px" width="16" height="15" viewBox="0 0 16 15" fill="none" stroke="#555" stroke-width="1.3"><path d="M1 4.5h3.5L9 1v13L4.5 10.5H1z"/><path d="M11 5.5q1.5 2 0 4M13 3.5q3 4 0 8"/></svg>
<svg class="abs" style="left:1533px;top:772px" width="14" height="15" viewBox="0 0 14 15" fill="none" stroke="#555" stroke-width="1.3"><path d="M4 1h9v9.5H4z"/><path d="M1.5 4v10.5h10"/></svg>
<svg class="abs" style="left:1570px;top:772px" width="14" height="15" viewBox="0 0 14 15" fill="none" stroke="#555" stroke-width="1.3"><circle cx="5.8" cy="6" r="4.8"/><path d="M9.3 9.5 L13 13.5"/></svg>

<div class="abs" style="left:1440px;top:354px;width:113px;height:39px;border-radius:20px;background:linear-gradient(#f6f6f6,#e2e2e2);border:1px solid #b8b8b8;box-shadow:0 2px 4px rgba(0,0,0,.25)"></div>
<svg class="abs" style="left:1424px;top:346px" width="52" height="52" viewBox="0 0 52 52">
<defs><linearGradient id="gtop" x1="0" y1="0" x2="0" y2="1"><stop offset="0" stop-color="#3a8a5a"/><stop offset="1" stop-color="#14703c"/></linearGradient>
<clipPath id="ballc"><circle cx="26" cy="26" r="21.5"/></clipPath></defs>
<circle cx="26" cy="26" r="25" fill="#f8f8f8" stroke="#a8a8a8" stroke-width="1"/>
<g clip-path="url(#ballc)"><rect x="0" y="0" width="52" height="28" fill="url(#gtop)"/><rect x="0" y="28" width="52" height="24" fill="#4fc866"/></g>
<ellipse cx="26" cy="10" rx="5" ry="1.5" fill="rgba(255,255,255,.5)"/>
<text x="26" y="31.5" text-anchor="middle" font-family="Liberation Sans" font-size="14" letter-spacing="0.5" fill="#fff">49%</text>
</svg>
<svg class="abs" style="left:1477px;top:361px" width="10" height="26" viewBox="0 0 10 26"><path d="M5 2 L8 5.5 L6 5.5 L6 10 L4 10 L4 5.5 L2 5.5 Z" fill="#e05030"/><path d="M5 23 L8 19.5 L6 19.5 L6 15 L4 15 L4 19.5 L2 19.5 Z" fill="#2a9a40"/></svg>
<div class="abs" style="left:1496px;top:361px;font-size:10px;line-height:12px;color:#111;white-space:nowrap">2.7K/s</div>
<div class="abs" style="left:1496px;top:376px;font-size:10px;line-height:12px;color:#111;white-space:nowrap">1.6K/s</div>
<svg class="abs" style="left:1527px;top:363px" width="22" height="22" viewBox="0 0 22 22"><circle cx="10" cy="11" r="9.5" fill="#ddd"/><circle cx="10" cy="11" r="7.8" fill="#3b82d8"/><path d="M10 7.5v7M6.5 11h7" stroke="#fff" stroke-width="1.8"/><circle cx="16" cy="5" r="4" fill="#e02a2a"/></svg>

<div class="abs" style="left:1419px;top:725px;width:90px;height:42px;border-radius:21px;background:rgba(40,44,54,.92);box-shadow:0 1px 3px rgba(0,0,0,.3)"></div>
<svg class="abs" style="left:1428px;top:729px" width="10" height="36" viewBox="0 0 10 36"><path d="M5 1 L8 4.5 L6 4.5 L6 8 L4 8 L4 4.5 L2 4.5 Z" fill="#3aa0e8"/><path d="M5 35 L8 31.5 L6 31.5 L6 28 L4 28 L4 31.5 L2 31.5 Z" fill="#2ec040"/></svg>
<div class="abs" style="left:1443px;top:729px;font-size:11px;line-height:13px;color:#fff;white-space:nowrap">2.7<span style="color:#bbb">K/s</span></div>
<div class="abs" style="left:1443px;top:750px;font-size:11px;line-height:13px;color:#fff;white-space:nowrap">1.6<span style="color:#bbb">K/s</span></div>
<svg class="abs" style="left:1478px;top:715px" width="62" height="62" viewBox="0 0 62 62">
<defs><linearGradient id="arcg" x1="0" y1="0" x2="0" y2="1"><stop offset="0" stop-color="#30d8c0"/><stop offset="0.5" stop-color="#5ad070"/><stop offset="1" stop-color="#c8e040"/></linearGradient></defs>
<circle cx="31" cy="31" r="29" fill="#4b505d" fill-opacity=".94" stroke="#3a3e48" stroke-width="1"/>
<path d="M31 5.5 A25.5 25.5 0 0 1 31 56.5" fill="none" stroke="url(#arcg)" stroke-width="2.2"/>
<text x="13" y="39" font-family="Liberation Sans" font-size="25" fill="#f4f4f4" stroke="#4b505d" stroke-width="0.6">49</text><text x="40" y="39" font-family="Liberation Sans" font-size="13" fill="#fff">%</text>
</svg>

<svg class="abs" style="left:1240px;top:698px" width="56" height="58" viewBox="0 0 56 58"><g fill="rgba(160,160,160,.55)">
<path d="M32 13 Q40 16 40 25 Q40 31 35 35 L50 47 Q52 50 50 52 L48 53 L46 51 L44 52 L42 50 L40 50 L27 38 L25 34 Q31 31 31 24 Q31 18 28 14 Z"/>
<path d="M18 5 A12 12 0 1 0 18 29 A12 12 0 1 0 18 5 Z M9.5 17 Q10 9 18 9 Q26 9 26.5 17 Z" fill-rule="evenodd"/>
<path d="M13.5 29 L20.5 29 L20.5 36 L22 37 L20.5 39 L22 40.5 L20.5 42 L22 43.5 L20.5 45 L20.5 50 L17 54 L13.5 50 Z M15.5 32 L15.5 48 L17.5 48 L17.5 32 Z" fill-rule="evenodd"/>
</g></svg>
<div class="abs" style="left:1298px;top:705px;font-size:20px;line-height:24px;letter-spacing:0.9px;color:rgba(150,150,150,.72);white-space:nowrap">激活 Windows</div>
<div class="abs" style="left:1298px;top:730px;font-size:13.5px;line-height:17px;color:rgba(150,150,150,.72);white-space:nowrap">转到“电脑设置”以激活 <span style="font-size:18px">Windows。</span></div>

</body></html>
